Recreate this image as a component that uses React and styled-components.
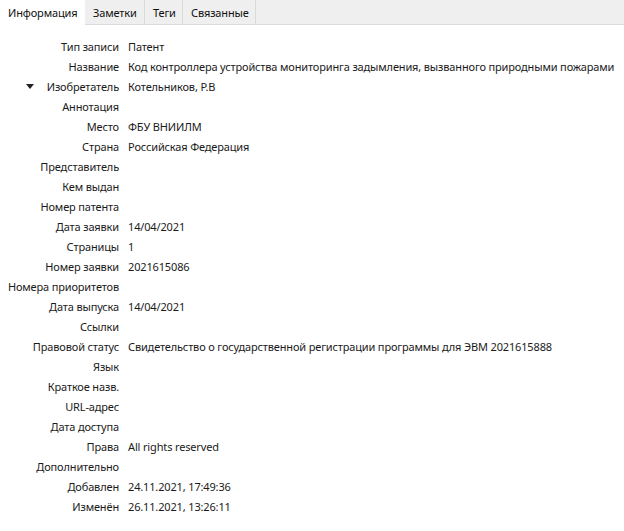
import React from "react";
import styled, { createGlobalStyle } from "styled-components";

const Global = createGlobalStyle`
  html, body {
    margin: 0;
    padding: 0;
    background: #fff;
  }
  body {
    font-family: "Noto Sans", "Open Sans", sans-serif;
    font-size: 11px;
    letter-spacing: -0.15px;
    color: #1a1a1a;
  }
`;

const Wrapper = styled.div`
  width: 624px;
  height: 531px;
  background: #fff;
  overflow: hidden;
`;

const TabBar = styled.div`
  display: flex;
  height: 24px;
  background: #efefef;
  border-bottom: 1px solid #dcdcdc;
`;

const Tab = styled.div`
  display: flex;
  align-items: center;
  padding: 0 8px;
  width: ${props => props.w}px;
  box-sizing: border-box;
  background: ${props => (props.active ? "#fff" : "transparent")};
  border-right: ${props => (props.active ? "none" : "1px solid #dadada")};
  margin-bottom: ${props => (props.active ? "-1px" : "0")};
  color: #111;
  white-space: nowrap;
`;

const Fields = styled.div`
  display: grid;
  grid-template-columns: 119px 1fr;
  column-gap: 9px;
  grid-auto-rows: 20px;
  padding-top: 11px;
`;

const Label = styled.div`
  position: relative;
  display: flex;
  align-items: center;
  justify-content: flex-end;
  white-space: nowrap;
  color: #1a1a1a;
`;

const Value = styled.div`
  display: flex;
  align-items: center;
  white-space: nowrap;
  color: #1a1a1a;
`;

const Toggle = styled.svg`
  position: absolute;
  left: 26px;
  top: 8px;
`;

const rows = [
  ["Тип записи", "Патент"],
  ["Название", "Код контроллера устройства мониторинга задымления, вызванного природными пожарами"],
  ["Изобретатель", "Котельников, Р.В", true],
  ["Аннотация", ""],
  ["Место", "ФБУ ВНИИЛМ"],
  ["Страна", "Российская Федерация"],
  ["Представитель", ""],
  ["Кем выдан", ""],
  ["Номер патента", ""],
  ["Дата заявки", "14/04/2021"],
  ["Страницы", "1"],
  ["Номер заявки", "2021615086"],
  ["Номера приоритетов", ""],
  ["Дата выпуска", "14/04/2021"],
  ["Ссылки", ""],
  ["Правовой статус", "Свидетельство о государственной регистрации программы для ЭВМ 2021615888"],
  ["Язык", ""],
  ["Краткое назв.", ""],
  ["URL-адрес", ""],
  ["Дата доступа", ""],
  ["Права", "All rights reserved"],
  ["Дополнительно", ""],
  ["Добавлен", "24.11.2021, 17:49:36"],
  ["Изменён", "26.11.2021, 13:26:11"],
];

const tabs = [
  ["Информация", 85, true],
  ["Заметки", 60],
  ["Теги", 38],
  ["Связанные", 73],
];

export default function App() {
  return (
    <Wrapper>
      <Global />
      <TabBar>
        {tabs.map(([t, w, active]) => (
          <Tab key={t} w={w} active={active}>{t}</Tab>
        ))}
      </TabBar>
      <Fields>
        {rows.map(([label, value, toggle]) => (
          <React.Fragment key={label}>
            <Label>
              {toggle && (
                <Toggle width="8" height="5" viewBox="0 0 8 5">
                  <path d="M0 0 L8 0 L4 5 Z" fill="#222" />
                </Toggle>
              )}
              {label}
            </Label>
            <Value>{value}</Value>
          </React.Fragment>
        ))}
      </Fields>
    </Wrapper>
  );
}
